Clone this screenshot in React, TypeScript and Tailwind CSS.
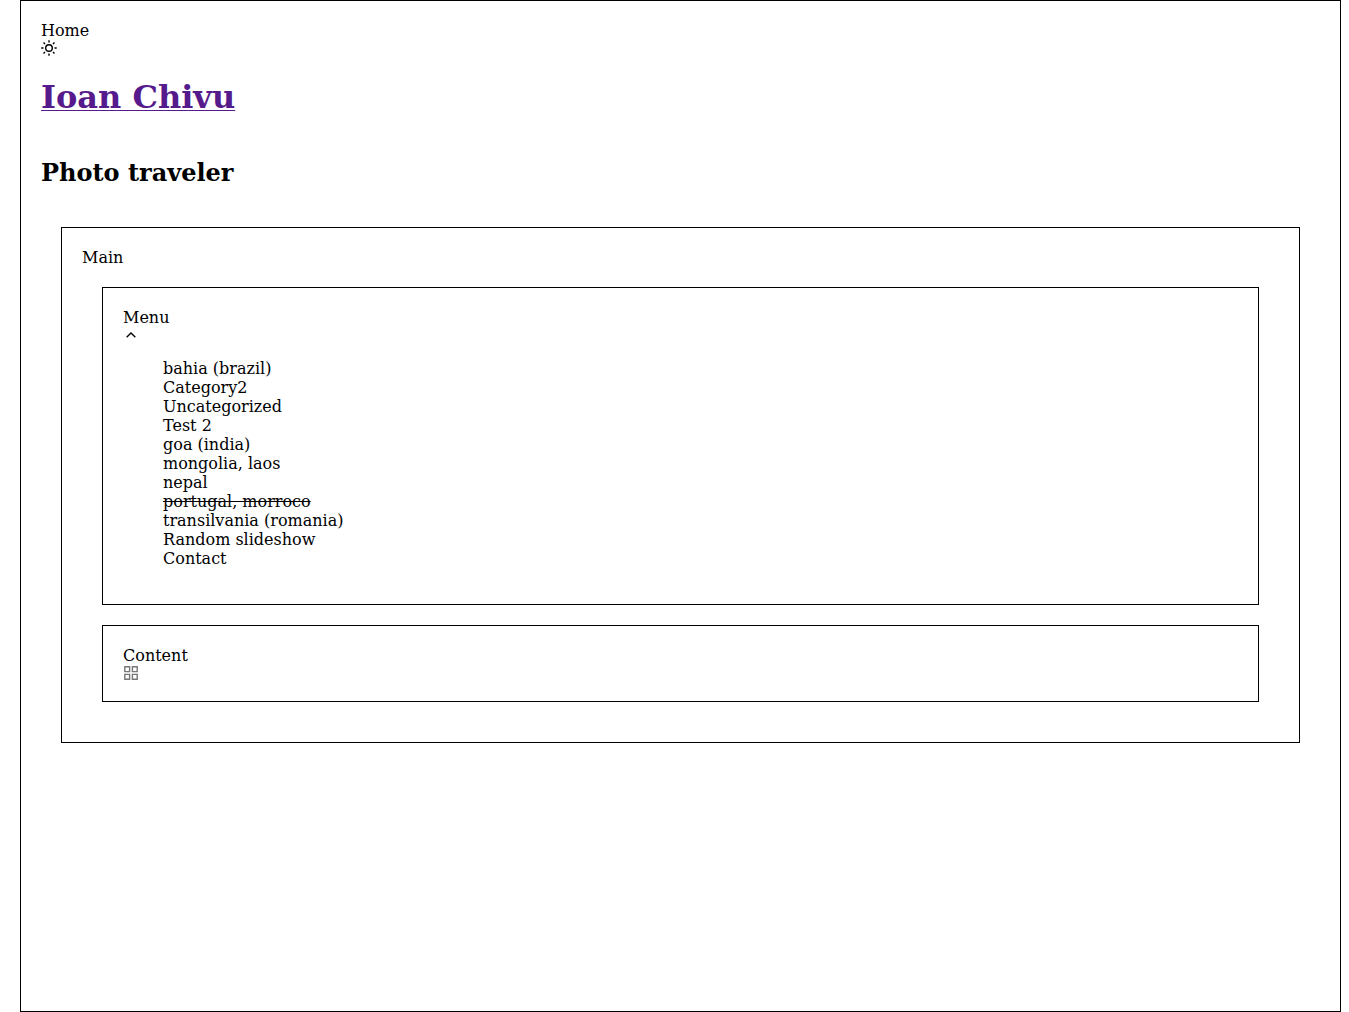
import React from "react";

const items = [
  "bahia (brazil)",
  "Category2",
  "Uncategorized",
  "Test 2",
  "goa (india)",
  "mongolia, laos",
  "nepal",
  "portugal, morroco",
  "transilvania (romania)",
  "Random slideshow",
  "Contact",
];

function SunIcon() {
  return (
    <svg className="block size-4" viewBox="0 0 16 16" fill="none" stroke="currentColor" strokeWidth="1.400" aria-hidden="true">
      <circle cx="8" cy="8" r="3.300" />
      <path d="M8 0.300v2.200M8 13.500v2.200M0.300 8h2.200M13.500 8h2.200M2.500 2.500L4 4M12 12l1.500 1.500M13.500 2.500L12 4M4 12l-1.500 1.500" />
    </svg>
  );
}

function ChevronIcon() {
  return (
    <svg className="block size-4" viewBox="0 0 24 24" fill="none" stroke="currentColor" strokeWidth="2" aria-hidden="true">
      <path d="M5.500 15.500l6.500-6.500 6.500 6.500" />
    </svg>
  );
}

function GridIcon() {
  return (
    <svg className="block size-4" viewBox="0 0 16 16" fill="none" stroke="currentColor" strokeWidth="1.400" aria-hidden="true">
      <path d="M1.800 1.800h4.800v4.800H1.800zM9.400 1.800h4.800v4.800H9.400zM1.800 9.400h4.800v4.800H1.800zM9.400 9.400h4.800v4.800H9.400z" />
    </svg>
  );
}

export default function App() {
  return (
    <div className="flex min-h-screen flex-col bg-white pr-2 pl-5 font-['DejaVu_Serif',serif] text-base leading-[19px] text-black">
      <div className="grow border border-black p-5">
        <div>Home</div>
        <button type="button" aria-label="Toggle theme" className="block">
          <SunIcon />
        </button>
        <h1 className="mt-[22px] text-[32px] leading-[38px] font-bold">
          <a href="#" className="text-[#551a8b] underline decoration-1 underline-offset-2">Ioan Chivu</a>
        </h1>
        <h2 className="mt-[43px] text-2xl leading-7 font-bold">Photo traveler</h2>
        <main className="m-5 mt-10 border border-black p-5">
          <div>Main</div>
          <nav className="m-5 border border-black p-5">
            <div>Menu</div>
            <button type="button" aria-label="Collapse menu" className="block">
              <ChevronIcon />
            </button>
            <ul className="my-4 pl-10">
              {items.map((item) => (
                <li key={item}>
                  <a href="#" className={item === "portugal, morroco" ? "line-through" : ""}>{item}</a>
                </li>
              ))}
            </ul>
          </nav>
          <section className="m-5 border border-black p-5">
            <div>Content</div>
            <button type="button" aria-label="Show grid" className="block text-[#777777]">
              <GridIcon />
            </button>
          </section>
        </main>
      </div>
    </div>
  );
}
